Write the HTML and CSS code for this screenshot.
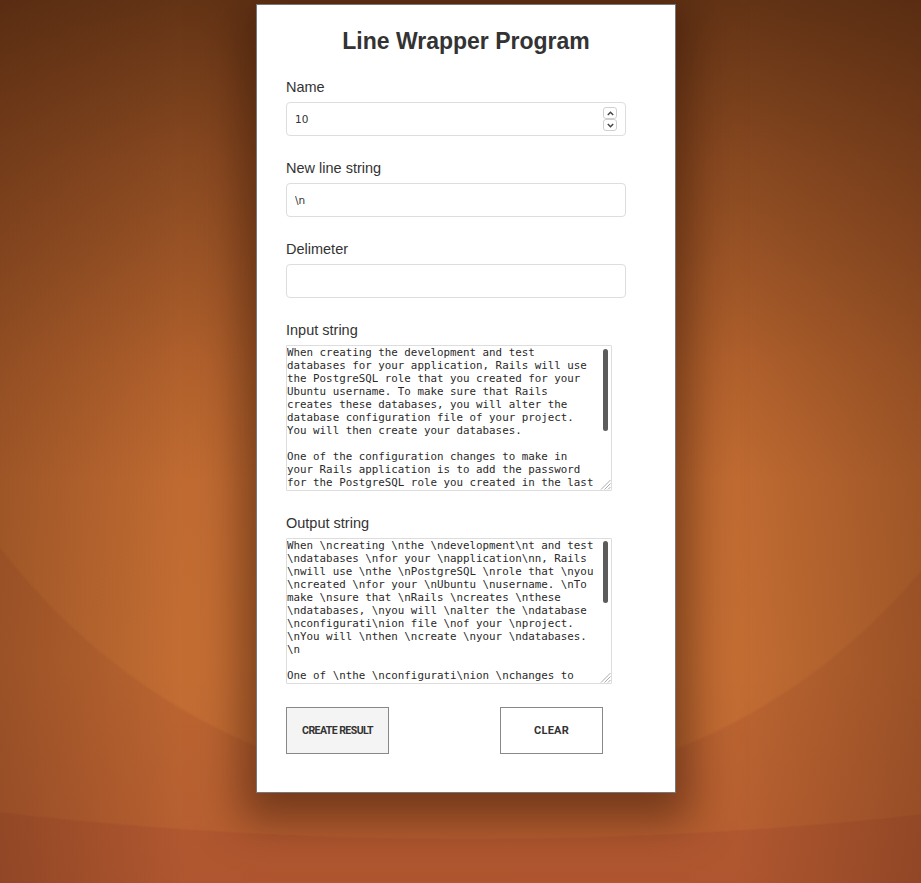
FILE: index.html
```html
<!DOCTYPE html>
<html lang="en">
<head>
<meta charset="utf-8">
<title>Line Wrapper Program</title>
<link rel="stylesheet" href="styles.css">
</head>
<body>
<main class="card">
  <h1 class="title">Line Wrapper Program</h1>
  <form class="form">
    <div class="field">
      <label class="label" for="name">Name</label>
      <div class="num-field">
        <input class="num-input" id="name" type="text" value="10">
        <div class="spinner">
          <span class="spin-btn"><svg width="7" height="5" viewBox="0 0 7 5"><polyline points="0.8,4 3.5,1.2 6.2,4" fill="none" stroke="#444" stroke-width="1.4"/></svg></span>
          <span class="spin-btn"><svg width="7" height="5" viewBox="0 0 7 5"><polyline points="0.8,1 3.5,3.8 6.2,1" fill="none" stroke="#444" stroke-width="1.4"/></svg></span>
        </div>
      </div>
    </div>
    <div class="field">
      <label class="label" for="newline">New line string</label>
      <input class="text-input" id="newline" type="text" value="\n">
    </div>
    <div class="field">
      <label class="label" for="delim">Delimeter</label>
      <input class="text-input" id="delim" type="text" value="">
    </div>
    <div class="field">
      <label class="label" for="input">Input string</label>
      <div class="area-wrap">
        <textarea class="area" id="input">When creating the development and test databases for your application, Rails will use the PostgreSQL role that you created for your Ubuntu username. To make sure that Rails creates these databases, you will alter the database configuration file of your project. You will then create your databases.

One of the configuration changes to make in your Rails application is to add the password for the PostgreSQL role you created in the last step. To keep sensitive information such as passwords secure, it is a good idea to store this in an environment variable rather than to write it directly in your configuration file.

To store your password as an environment variable on login, run the following command.</textarea>
        <span class="thumb" style="top: 4px; height: 82px;"></span>
        <svg class="resizer" width="12" height="12" viewBox="0 0 12 12"><line x1="2" y1="11.5" x2="11.5" y2="2" stroke="#aaa" stroke-width="1"/><line x1="5.5" y1="11.5" x2="11.5" y2="5.5" stroke="#aaa" stroke-width="1"/><line x1="9" y1="11.5" x2="11.5" y2="9" stroke="#aaa" stroke-width="1"/></svg>
      </div>
    </div>
    <div class="field field-last">
      <label class="label" for="output">Output string</label>
      <div class="area-wrap">
        <textarea class="area" id="output">When \ncreating \nthe \ndevelopment\nt and test \ndatabases \nfor your \napplication\nn, Rails \nwill use \nthe \nPostgreSQL \nrole that \nyou \ncreated \nfor your \nUbuntu \nusername. \nTo make \nsure that \nRails \ncreates \nthese \ndatabases, \nyou will \nalter the \ndatabase \nconfigurati\nion file \nof your \nproject. \nYou will \nthen \ncreate \nyour \ndatabases. \n

One of \nthe \nconfigurati\nion \nchanges to make \nin your \nRails \napplication\nn is to \nadd the \npassword \nfor the \nPostgreSQL \nrole you \ncreated in \nthe last \nstep. \nTo keep \nsensitive \ninformation\nn such as \npasswords \nsecure, it is a \ngood idea \nto store \nthis in an \nenvironment\nt variable \nrather than \nto write it \ndirectly in \nyour \nconfiguratio\nn file. \n</textarea>
        <span class="thumb" style="top: 3px; height: 62px;"></span>
        <svg class="resizer" width="12" height="12" viewBox="0 0 12 12"><line x1="2" y1="11.5" x2="11.5" y2="2" stroke="#aaa" stroke-width="1"/><line x1="5.5" y1="11.5" x2="11.5" y2="5.5" stroke="#aaa" stroke-width="1"/><line x1="9" y1="11.5" x2="11.5" y2="9" stroke="#aaa" stroke-width="1"/></svg>
      </div>
    </div>
    <div class="actions">
      <button class="btn btn-primary" type="button">CREATE RESULT</button>
      <button class="btn btn-clear" type="button">CLEAR</button>
    </div>
  </form>
</main>
</body>
</html>
```

FILE: styles.css
```css
html, body {
  margin: 0;
  padding: 0;
}

body {
  min-height: 883px;
  font-family: "Liberation Sans", Arial, sans-serif;
  color: #333;
  background-color: #b8622f;
  background-image:
    linear-gradient(to right, rgba(60, 25, 8, 0.26) 0%, rgba(60, 25, 8, 0) 20%, rgba(60, 25, 8, 0) 80%, rgba(60, 25, 8, 0.26) 100%),
    linear-gradient(to bottom, rgba(70, 34, 12, 0.72) 0px, rgba(80, 38, 14, 0.45) 160px, rgba(90, 40, 15, 0.14) 360px, rgba(0, 0, 0, 0) 480px),
    radial-gradient(ellipse 620px 690px at 470px 100px, rgba(214, 126, 56, 0.3) 0, rgba(214, 126, 56, 0.3) 99.5%, rgba(214, 126, 56, 0) 100%),
    radial-gradient(ellipse 1500px 530px at 470px 310px, rgba(0, 0, 0, 0) 0, rgba(0, 0, 0, 0) 99.6%, rgba(160, 70, 45, 0.3) 100%),
    linear-gradient(to bottom, #a0552a 0%, #b5612e 45%, #bc6631 75%, #b65d31 100%);
}

.card {
  box-sizing: border-box;
  width: 420px;
  margin: 4px 0 0 256px;
  padding: 22px 49px 38px 29px;
  background: #fff;
  border: 1px solid #777;
  box-shadow: 0 14px 40px 14px rgba(50, 20, 5, 0.5);
}

.title {
  margin: 0 -20px 24px 0;
  font-size: 23px;
  line-height: 28px;
  font-weight: 700;
  text-align: center;
  color: #333;
}

.form {
  width: 340px;
  margin: 0;
}

.field {
  margin-bottom: 24px;
}

.field-last {
  margin-bottom: 23px;
}

.label {
  display: block;
  font-size: 14.5px;
  line-height: 17px;
  margin-bottom: 6px;
  color: #333;
}

.text-input,
.num-field {
  box-sizing: border-box;
  display: block;
  width: 340px;
  height: 34px;
  border: 1px solid #ddd;
  border-radius: 4px;
  background: #fff;
  padding: 0 8px;
  font-family: "DejaVu Sans", sans-serif;
  font-size: 10.5px;
  color: #333;
  outline: none;
}

.num-field {
  display: flex;
  align-items: center;
}

.num-input {
  flex: 1;
  min-width: 0;
  border: 0;
  padding: 0;
  margin: 0;
  outline: none;
  background: transparent;
  font-family: "DejaVu Sans", sans-serif;
  font-size: 10.5px;
  color: #333;
}

.spinner {
  display: flex;
  flex-direction: column;
}

.spin-btn {
  box-sizing: border-box;
  width: 14px;
  height: 12px;
  border: 1px solid #d0d0d0;
  border-radius: 3px;
  display: flex;
  align-items: center;
  justify-content: center;
  background: #fff;
}

.area-wrap {
  position: relative;
  width: 326px;
  height: 146px;
}

.area {
  box-sizing: border-box;
  display: block;
  width: 326px;
  height: 146px;
  margin: 0;
  padding: 0 12px 0 0;
  border: 1px solid #ddd;
  border-radius: 1px;
  font-family: "DejaVu Sans Mono", monospace;
  font-size: 10.833px;
  line-height: 13px;
  color: #2a2a2a;
  background: #fff;
  outline: none;
  overflow: hidden;
  resize: none;
}

.thumb {
  position: absolute;
  left: 317px;
  width: 5px;
  border-radius: 3px;
  background: #5c5c5c;
}

.resizer {
  position: absolute;
  right: 1px;
  bottom: 1px;
}

.actions {
  display: flex;
  gap: 111px;
}

.btn {
  box-sizing: border-box;
  width: 103px;
  height: 47px;
  border: 1px solid #888;
  border-radius: 0;
  background: #fff;
  font-family: Roboto, "Liberation Sans", sans-serif;
  font-weight: 700;
  font-size: 10.5px;
  letter-spacing: -0.55px;
  color: #333;
  padding: 0;
}

.btn-primary {
  background: #f4f4f4;
}

.btn-clear {
  font-size: 11px;
  letter-spacing: 0.2px;
}
```
